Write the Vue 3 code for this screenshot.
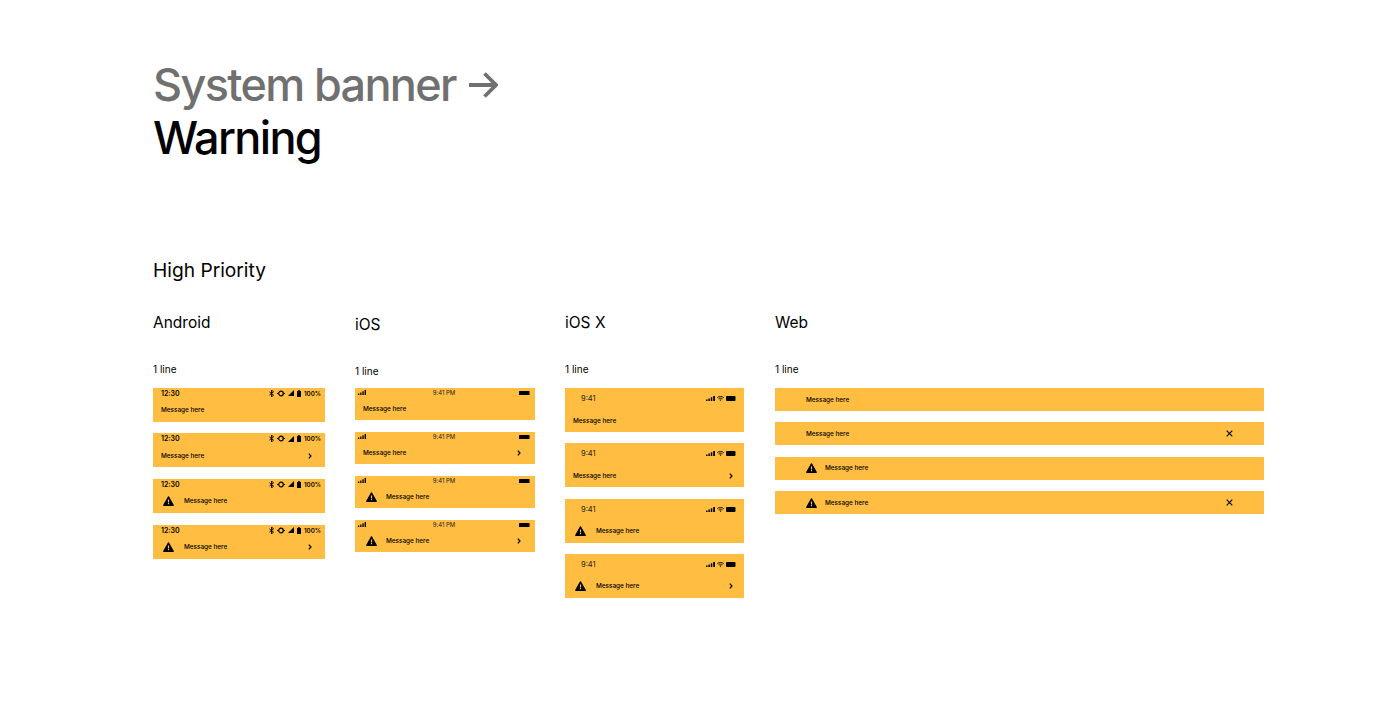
<template>
  <main class="page">
    <h1 class="title">
      <span class="crumb">
        System banner
        <svg class="arrow" width="30" height="26" viewBox="0 0 30 26">
          <path d="M1 13h27M16.500 1.500 28 13 16.500 24.500" fill="none" stroke="#707070" stroke-width="3.800"/>
        </svg>
      </span>
      <span>Warning</span>
    </h1>
    <h2 class="section">High Priority</h2>

    <div class="columns">
      <section v-for="col in columns" :key="col.name" :class="['col', col.name]">
        <h3 class="platform">{{ col.label }}</h3>
        <p class="lines">1 line</p>
        <div class="stack">
          <div v-for="(v, i) in variants" :key="i" class="banner">
            <!-- status bars -->
            <div v-if="col.name === 'android'" class="status">
              <span class="time">12:30</span>
              <span class="status-icons">
                <svg width="5" height="7" viewBox="0 0 5 7"><path d="M2.500 0v7l2-1.700L2.800 3.500l1.700-1.800zM.4 1.800l3.800 3.400M.4 5.200l3.800-3.400" fill="none" stroke="#000" stroke-width=".9"/></svg>
                <svg width="8" height="7" viewBox="0 0 8 7"><circle cx="4" cy="3.500" r="2.300" fill="none" stroke="#000" stroke-width="1.200"/><path d="M0 3.500h1.800M6.200 3.500H8" stroke="#000"/></svg>
                <svg width="6" height="6" viewBox="0 0 6 6"><path d="M6 0v6H0z"/></svg>
                <svg width="4" height="7" viewBox="0 0 4 7"><path d="M1.200 0h1.600v1H4v6H0V1h1.200z"/></svg>
                <span class="pct">100%</span>
              </span>
            </div>
            <div v-else-if="col.name === 'ios'" class="status">
              <svg width="8" height="5" viewBox="0 0 8 5"><path d="M0 3.500h1.300V5H0zM2.200 2.500h1.300V5H2.200zM4.400 1.200h1.300V5H4.400zM6.600 0H8v5H6.600z"/></svg>
              <span class="clock">9:41 PM</span>
              <svg class="batt" width="11" height="4" viewBox="0 0 11 4"><rect width="10.500" height="4" rx=".6"/></svg>
            </div>
            <div v-else-if="col.name === 'iosx'" class="status">
              <span class="clock">9:41</span>
              <span class="status-icons">
                <svg width="9" height="5" viewBox="0 0 9 5"><path d="M0 3.600h1.500V5H0zM2.400 2.600h1.500V5H2.400zM4.800 1.300h1.500V5H4.800zM7.200 0H9v5H7.200z"/></svg>
                <svg width="7" height="5" viewBox="0 0 7 5"><path d="M.3 1.600c1.800-1.500 4.600-1.500 6.400 0M1.500 2.800c1.100-.8 2.900-.8 4 0" fill="none" stroke="#000" stroke-width=".9"/><path d="M3.500 5 2.400 3.800c.6-.4 1.600-.4 2.200 0z"/></svg>
                <svg width="10" height="5" viewBox="0 0 10 5"><rect width="9.500" height="5" rx="1"/></svg>
              </span>
            </div>

            <div class="body">
              <svg v-if="v.warn" class="warn" width="11" height="10" viewBox="0 0 11 10">
                <path d="M5.500.8 10.300 9.300H.7z" stroke="#000" stroke-width="1.200" stroke-linejoin="round"/>
                <path d="M4.900 3.400h1.200v3H4.900zM4.900 7h1.200v1.200H4.900z" fill="#ffbe42"/>
              </svg>
              <span class="msg">Message here</span>
              <svg v-if="v.action && col.name !== 'web'" class="chevron" width="4" height="6" viewBox="0 0 4 6">
                <path d="M.8.600 3 3 .8 5.400" fill="none" stroke="#000" stroke-width="1.200"/>
              </svg>
              <svg v-if="v.action && col.name === 'web'" class="close" width="7" height="7" viewBox="0 0 7 7">
                <path d="M.7.700l5.600 5.600M6.300.700.7 6.300" fill="none" stroke="#000" stroke-width="1.100"/>
              </svg>
            </div>
          </div>
        </div>
      </section>
    </div>
  </main>
</template>

<script setup>
const columns = [
  { name: 'android', label: 'Android' },
  { name: 'ios', label: 'iOS' },
  { name: 'iosx', label: 'iOS X' },
  { name: 'web', label: 'Web' },
];

// every platform shows the same four banners
const variants = [
  { warn: false, action: false },
  { warn: false, action: true },
  { warn: true, action: false },
  { warn: true, action: true },
];
</script>

<style>
html,
body {
  background: #fff;
}
</style>

<style scoped>
.page {
  box-sizing: border-box;
  height: 716px;
  padding: 58px 0 0 153px;
  font-family: Inter, "Liberation Sans", sans-serif;
  color: #000;
  overflow: hidden;
}

.title {
  margin: 0;
  display: flex;
  flex-direction: column;
  font-size: 45px;
  line-height: 53px;
  font-weight: 450;
  letter-spacing: -1.650px;
}

.crumb {
  display: flex;
  align-items: center;
  gap: 12px;
  color: #707070;
}

.arrow {
  flex: none;
}

.section {
  margin: 93px 0 0;
  font-size: 19.200px;
  line-height: 26px;
  font-weight: 400;
}

.columns {
  display: grid;
  grid-template-columns: 172px 180px 180px 489px;
  column-gap: 30px;
  margin-top: 28px;
}

.platform {
  margin: 0;
  font-size: 15.500px;
  line-height: 24px;
  font-weight: 400;
}

.lines {
  margin: 27px 0 0;
  font-size: 10px;
  line-height: 14px;
}

.ios .platform {
  margin-top: 2px;
}

.ios .lines {
  margin-bottom: -2px;
}

.stack {
  display: flex;
  flex-direction: column;
  margin-top: 12px;
  gap: 11.700px;
}

.android .stack {
  margin-top: 11.600px;
}

.ios .stack {
  gap: 12px;
}

.iosx .stack {
  gap: 11.300px;
}

.web .stack {
  gap: 11.400px;
}

.banner {
  display: flex;
  flex-direction: column;
  background: #ffbe42;
  font-size: 6.400px;
  font-weight: 500;
}

.android .banner {
  height: 34px;
  padding: 0 4px 0 8px;
}

.ios .banner {
  height: 32px;
  padding: 0 4px 0 3px;
}

.iosx .banner {
  width: 179px;
  box-sizing: border-box;
  height: 44px;
  padding: 0 8px;
}

.web .banner {
  height: 23px;
  justify-content: center;
}

.status {
  display: flex;
  align-items: center;
  justify-content: space-between;
}

.android .status {
  height: 11px;
  font-weight: 600;
}

.ios .status {
  display: grid;
  grid-template-columns: 1fr auto 1fr;
  height: 9px;
  padding-right: 1px;
}

.ios .batt {
  justify-self: end;
}

.iosx .status {
  height: 21px;
  padding-left: 8px;
}

.status-icons {
  display: flex;
  align-items: center;
  gap: 3px;
}

.iosx .status-icons {
  gap: 2px;
}

.status svg {
  display: block;
}

.time {
  font-size: 7px;
}

.pct {
  font-size: 6.200px;
}

.clock {
  font-weight: 400;
  font-size: 6px;
  color: #222;
}

.iosx .clock {
  font-size: 7.500px;
}

.body {
  display: flex;
  align-items: center;
  flex: 1;
}

.ios .body {
  padding: 0 10px 0 5px;
}

.warn {
  flex: none;
  margin: 0 10px 0 2px;
}

.ios .warn {
  margin: 0 9px 0 3px;
}

.chevron {
  margin-left: auto;
  margin-right: 9.500px;
}

.ios .chevron {
  margin-right: 0;
}

.iosx .chevron {
  margin-right: 3.500px;
}

.web .body {
  padding-left: 31px;
}

.web .warn {
  margin: 0 8px 0 0;
}

.close {
  margin-left: auto;
  margin-right: 31px;
}
</style>
